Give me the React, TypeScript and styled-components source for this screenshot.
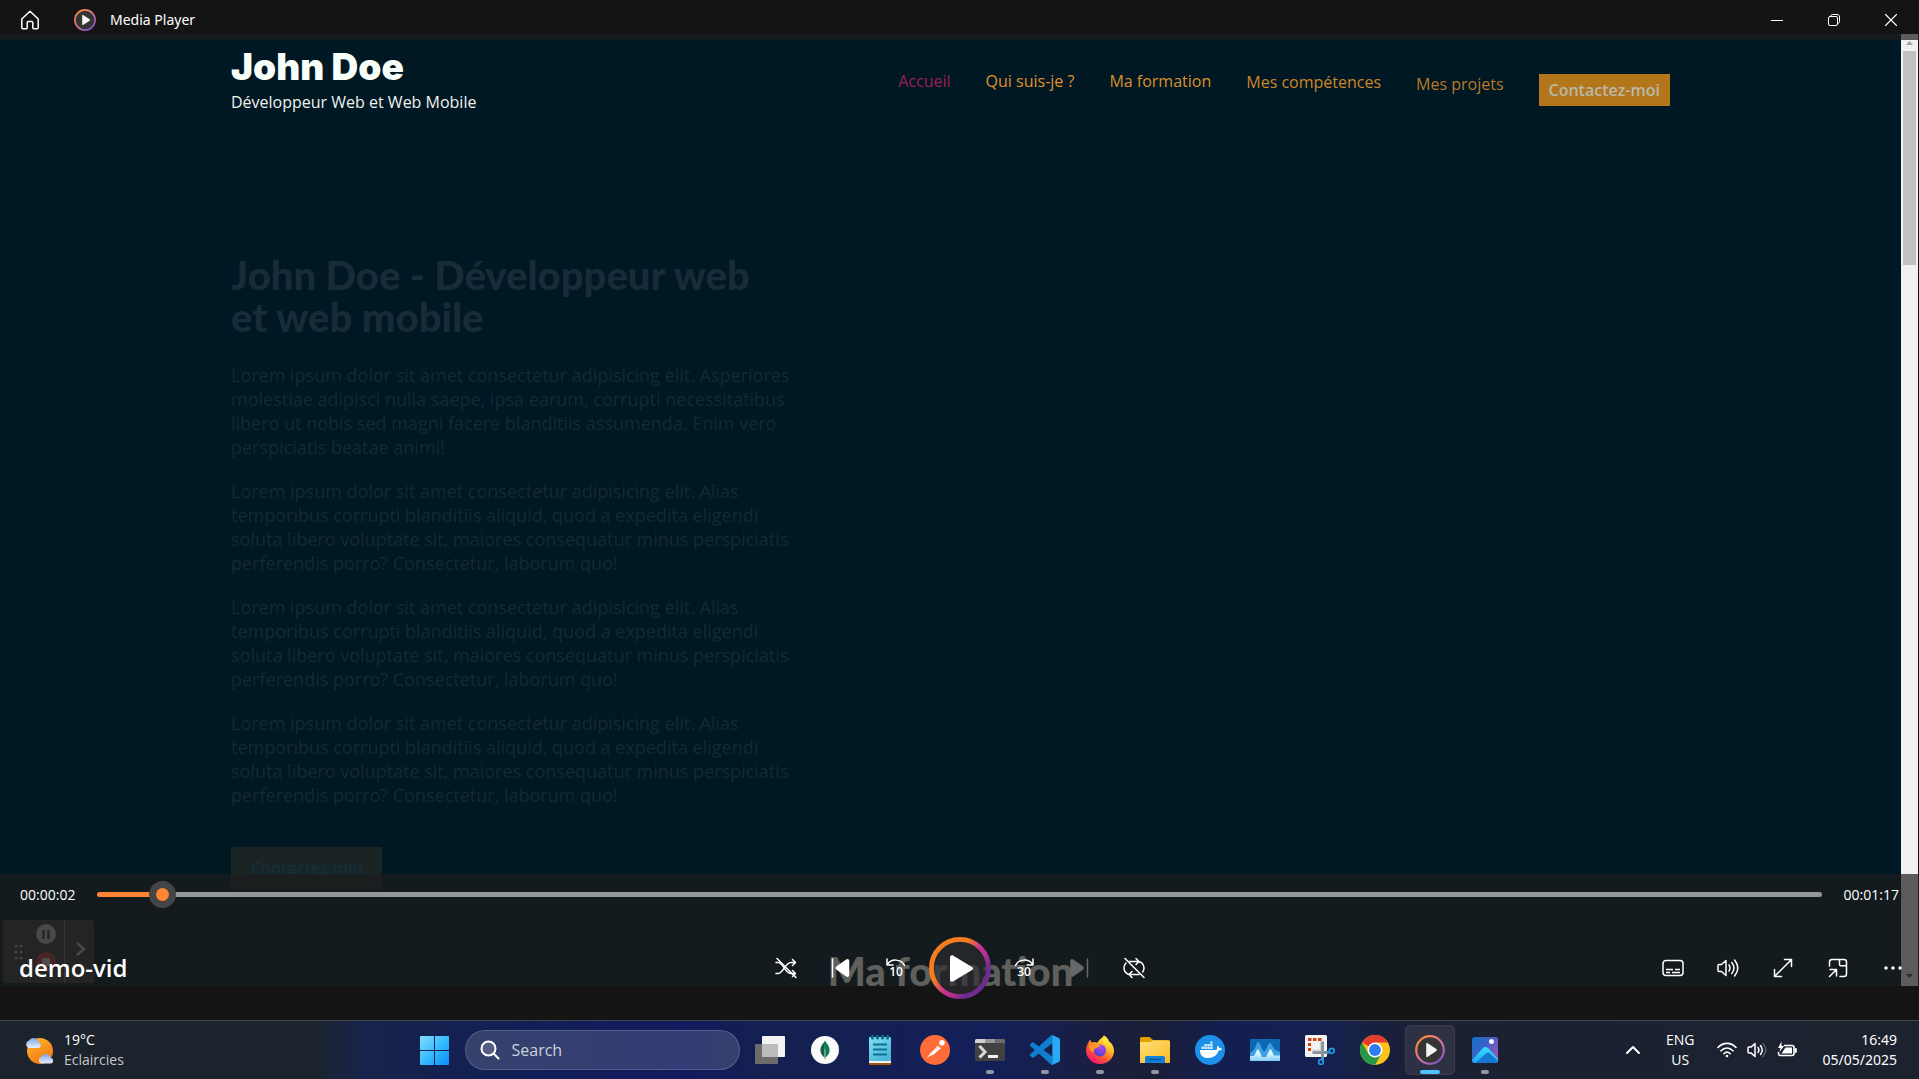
import React from "react";
import styled, { createGlobalStyle } from "styled-components";

const ui = `"Open Sans", "Noto Sans", sans-serif`;
const display = `"Lato", sans-serif`;
const tint = "rgba(28, 28, 28, 0.7)";

const GlobalStyle = createGlobalStyle`
  * { box-sizing: border-box; }
  body { margin: 0; background: #141414; font-family: ${ui}; overflow: hidden; }
  h1, h2, p, ul { margin: 0; padding: 0; }
  button { border: 0; padding: 0; background: none; color: inherit; font: inherit; }
  a { color: inherit; text-decoration: none; }
  svg { display: block; }
`;

const Desktop = styled.div`
  display: grid;
  grid-template-rows: minmax(0, 1fr) 59px;
  height: 100vh;
`;

const Player = styled.main`
  position: relative;
  display: grid;
  padding: 34px 1px 34px 0;
  background: #141414;
  color: #fff;
`;

/* ---------- recorded web page ---------- */

const Frame = styled.div`
  position: relative;
  display: grid;
  grid-template-columns: minmax(0, 1fr) 17px;
  overflow: hidden;
  background: #001724;
`;

const Site = styled.div`
  width: 100%;
  max-width: 1439px;
  height: 0;
  margin: 0 auto;
`;

const SiteHeader = styled.header`
  display: flex;
  justify-content: space-between;
  padding-top: 12px;
`;

const BrandName = styled.div`
  font-family: "Inter", sans-serif;
  font-size: 37px;
  line-height: 42px;
  font-weight: 900;
  color: #f8fff8;
`;

const BrandRole = styled.div`
  padding-bottom: 2px;
  font-size: 16px;
  line-height: 28px;
  color: #f0f2ec;
`;

const SiteNav = styled.nav`
  display: flex;
  align-items: flex-start;
  gap: 35px;
  padding-top: 24px;
  font-size: 16px;
  line-height: 22px;
`;

const NavLink = styled.a<{ $drop?: number; $color: string }>`
  margin-top: ${(p) => p.$drop ?? 0}px;
  color: ${(p) => p.$color};
`;

const NavButton = styled.a`
  margin-top: 4px;
  padding: 5px 10px;
  background: #b3761b;
  color: #b9b9a8;
  font-weight: 600;
`;

const Hero = styled.section`
  width: 570px;
  padding-top: 136px;
  color: #142a33;
`;

const HeroTitle = styled.h1`
  margin-bottom: 25px;
  font-family: ${display};
  font-size: 40px;
  line-height: 42px;
  font-weight: 900;
  color: #172c38;
  white-space: pre-line;
`;

const HeroText = styled.p`
  margin-bottom: 20px;
  font-family: ${ui};
  font-size: 18px;
  line-height: 24px;
  white-space: pre;
`;

const HeroButton = styled.a`
  display: inline-block;
  margin-top: 20px;
  padding: 9px 20px;
  background: #1a2424;
  color: #142f3c;
  font-size: 16px;
  line-height: 24px;
  font-weight: 600;
`;

const SectionTitle = styled.h2`
  margin-top: 61px;
  text-align: center;
  font-family: ${display};
  font-size: 40px;
  line-height: 42px;
  font-weight: 900;
  color: #fffff0;
`;

const ScrollTrack = styled.div`
  display: flex;
  flex-direction: column;
  align-items: center;
  justify-content: space-between;
  padding: 6px 0 4px;
  background: #f1f1f3;
`;

const ScrollThumb = styled.div`
  width: 13px;
  height: 214px;
  margin-bottom: auto;
  background: #c1c1c3;
`;

const Recorder = styled.div`
  position: absolute;
  left: 3px;
  bottom: 3px;
`;

/* ---------- player chrome ---------- */

const TitleBar = styled.header`
  position: absolute;
  inset: 0 0 auto 0;
  display: flex;
  align-items: center;
  height: 40px;
  padding-left: 20px;
  background: linear-gradient(#141414 34px, ${tint} 34px);
`;

const AppName = styled.span`
  margin-left: 14px;
  font-family: "Noto Sans", sans-serif;
  font-size: 14px;
  line-height: 20px;
`;

const HomeButton = styled.button`
  margin-right: 34px;
`;

const WindowButtons = styled.div`
  display: flex;
  margin-left: auto;
`;

const WindowButton = styled.button`
  display: grid;
  place-items: center;
  width: 57px;
  height: 38px;
`;

const Transport = styled.section`
  position: absolute;
  inset: auto 0 0 0;
  display: grid;
  grid-template-rows: 41px 105px;
  background: linear-gradient(${tint} 112px, #141414 112px);
`;

const SeekRow = styled.div`
  display: flex;
  align-items: center;
  gap: 22px;
  padding: 0 20px;
  font-size: 14px;
  line-height: 20px;
`;

const Seek = styled.input`
  flex: 1;
  height: 27px;
  margin: 0;
  appearance: none;
  background: none;

  &::-webkit-slider-runnable-track {
    height: 5px;
    border-radius: 3px;
    background: linear-gradient(90deg, #ff8533 60px, #929697 60px);
  }
  &::-webkit-slider-thumb {
    appearance: none;
    width: 27px;
    height: 27px;
    margin-top: -11px;
    border: 7px solid #454545;
    border-radius: 50%;
    background: #ff8533;
  }
`;

const ControlRow = styled.div`
  display: grid;
  grid-template-columns: 1fr auto 1fr;
  align-items: center;
  padding: 0 4px;
`;

const MediaTitle = styled.div`
  padding-left: 15px;
  font-size: 24px;
  line-height: 32px;
  font-weight: 600;
`;

const Controls = styled.div`
  display: flex;
  align-items: center;
  justify-content: flex-end;
  gap: 11px;
`;

const ControlButton = styled.button`
  display: grid;
  place-items: center;
  width: 44px;
  height: 44px;

  &:disabled { color: #66696b; }
`;

const PlayButton = styled(ControlButton)`
  width: 62px;
  height: 62px;
`;

/* ---------- taskbar ---------- */

const Taskbar = styled.footer`
  display: grid;
  grid-template-columns: 1fr auto 1fr;
  align-items: center;
  border-top: 1px solid #45484e;
  color: #fff;
  font-size: 14px;
  line-height: 20px;
  background: linear-gradient(90deg, #1c232c 0 16%, #17234a 19%, #111f56 27%, #131b5e 36%,
    #14204f 40%, #131f58 52%, #1a1f40 57%, #1b1e36 60%, #131f52 64%, #14204f 69%, #1c2033 74%, #1c232e 100%);
`;

const Weather = styled.button`
  display: flex;
  align-items: center;
  gap: 8px;
  justify-self: start;
  margin-left: 24px;
  text-align: left;
`;

const Muted = styled.div`
  color: #c6c9cc;
`;

const Apps = styled.div`
  display: flex;
  align-items: center;
  gap: 5px;
`;

const AppButton = styled.button<{ $active?: boolean; $open?: boolean }>`
  position: relative;
  display: grid;
  place-items: center;
  width: 50px;
  height: 50px;
  border-radius: 5px;
  background: ${(p) => (p.$active ? "rgba(255,255,255,0.08)" : "none")};
  box-shadow: ${(p) => (p.$active ? "inset 0 0 0 1px rgba(255,255,255,0.06)" : "none")};

  &::after {
    content: "";
    display: ${(p) => (p.$active || p.$open ? "block" : "none")};
    position: absolute;
    bottom: 1px;
    width: ${(p) => (p.$active ? 20 : 8)}px;
    height: 4px;
    border-radius: 2px;
    background: ${(p) => (p.$active ? "#4cc2ff" : "#9396a3")};
  }
`;

const SearchBox = styled.label`
  display: flex;
  align-items: center;
  gap: 12px;
  width: 275px;
  height: 40px;
  padding: 0 14px;
  border: 1px solid rgba(255, 255, 255, 0.16);
  border-radius: 20px;
  background: rgba(255, 255, 255, 0.15);
`;

const SearchInput = styled.input`
  flex: 1;
  min-width: 0;
  padding: 0;
  border: 0;
  outline: 0;
  background: none;
  color: #fff;
  font-family: ${ui};
  font-size: 16px;

  &::placeholder { color: #cdd0dc; opacity: 1; }
`;

const Tray = styled.div`
  display: flex;
  align-items: center;
  justify-self: end;
  padding-right: 22px;
`;

const Language = styled.button`
  margin: 0 22px 0 25px;
  text-align: center;
`;

const Status = styled.button`
  display: flex;
  align-items: center;
  gap: 10px;
`;

const Clock = styled.button`
  margin-left: 26px;
  font-family: "Noto Sans", sans-serif;
  text-align: right;
`;

/* ---------- drawings ---------- */

type LineProps = { w?: number; h?: number; box?: string; sw?: number; children: React.ReactNode };
const Line = ({ w = 22, h = 22, box = "0 0 22 22", sw = 1.5, children }: LineProps) => (
  <svg width={w} height={h} viewBox={box} fill="none" stroke="currentColor" strokeWidth={sw} strokeLinecap="round" strokeLinejoin="round" aria-hidden>
    {children}
  </svg>
);

const MediaLogo = ({ size, id }: { size: number; id: string }) => (
  <svg width={size} height={size} viewBox="0 0 30 30" aria-hidden>
    <defs>
      <linearGradient id={id} x1="0.15" y1="0.1" x2="0.8" y2="0.95">
        <stop offset="0" stopColor="#f98a3c" />
        <stop offset="0.5" stopColor="#d9729a" />
        <stop offset="1" stopColor="#8557c9" />
      </linearGradient>
    </defs>
    <circle cx="15" cy="15" r="13.8" fill="#353535" stroke={`url(#${id})`} strokeWidth="2.2" />
    <path d="M11.2 8.8v12.4c0 .8.6 1 1.2.7l9-6c.6-.4.6-1.4 0-1.8l-9-6c-.6-.3-1.2-.1-1.2.7z" fill="#f4f4f4" />
  </svg>
);

const PlayRing = () => (
  <svg width="62" height="62" viewBox="0 0 62 62" aria-hidden>
    <defs>
      <linearGradient id="ring" x1="0.2" y1="0.25" x2="0.85" y2="0.8">
        <stop offset="0" stopColor="#f57c1f" />
        <stop offset="0.22" stopColor="#f57c1f" />
        <stop offset="0.5" stopColor="#cc3290" />
        <stop offset="0.68" stopColor="#b5308f" />
        <stop offset="0.9" stopColor="#6f2c90" />
      </linearGradient>
    </defs>
    <circle cx="31" cy="31" r="28.6" fill="rgba(45,45,49,0.65)" stroke="url(#ring)" strokeWidth="4.8" />
    <path d="M21 20.5v22c0 2 1.8 2.8 3.4 1.8L43 33c1.4-.9 1.4-2.2 0-3L24.4 18.7C22.8 17.7 21 18.5 21 20.5z" fill="#fff" />
  </svg>
);

const RecorderDrawing = () => (
  <svg width="91" height="63" viewBox="0 0 91 63" aria-hidden>
    <rect width="91" height="63" rx="3" fill="#373737" />
    <g fill="#a5a5a5">
      {[26, 32, 38].map((y) => (
        <g key={y}>
          <circle cx="13" cy={y} r="1.5" />
          <circle cx="18" cy={y} r="1.5" />
        </g>
      ))}
    </g>
    <circle cx="43" cy="14" r="10" fill="#b0b0b0" />
    <path d="M40.5 10v9M45.5 10v9" stroke="#373737" strokeWidth="2.4" />
    <circle cx="43" cy="42" r="10" fill="#b03840" />
    <rect x="39" y="38" width="8" height="8" fill="#c8b8b8" />
    <path d="M61.5 1v61" stroke="#777" />
    <path d="M74 23l7 6-7 6" fill="none" stroke="#b4b4b4" strokeWidth="2.4" />
  </svg>
);

const WeatherIcon = () => (
  <svg width="32" height="30" viewBox="0 0 32 30" aria-hidden>
    <defs>
      <linearGradient id="sun" x1="0.2" y1="0" x2="0.7" y2="1"><stop offset="0" stopColor="#fcb72c" /><stop offset="1" stopColor="#f0730f" /></linearGradient>
      <linearGradient id="cloud" x1="0" y1="0" x2="0" y2="1"><stop offset="0" stopColor="#7fa6e6" /><stop offset="1" stopColor="#e6effc" /></linearGradient>
    </defs>
    <circle cx="16" cy="16" r="13" fill="url(#sun)" />
    <path d="M4.5 13a4 4 0 0 1 .5-7.5 5 5 0 0 1 9.3 1.5 3.2 3.2 0 0 1 .7 6z" fill="url(#cloud)" />
    <path d="M17.5 28.5a3.6 3.6 0 0 1 .3-7 4.6 4.6 0 0 1 8.7 1.2 3 3 0 0 1 .8 5.8z" fill="url(#cloud)" />
  </svg>
);

const Windows = () => (
  <svg width="29" height="29" viewBox="0 0 29 29" aria-hidden>
    <defs><linearGradient id="win" x1="0" y1="0" x2="1" y2="1"><stop offset="0" stopColor="#85dcff" /><stop offset="0.5" stopColor="#37bdff" /><stop offset="1" stopColor="#0a8cf8" /></linearGradient></defs>
    <path fill="url(#win)" d="M1 0h13v14H0V1a1 1 0 0 1 1-1zM15 0h13a1 1 0 0 1 1 1v13H15zM0 15h14v14H1a1 1 0 0 1-1-1zM15 15h14v13a1 1 0 0 1-1 1H15z" />
  </svg>
);

const TaskView = () => (
  <svg width="30" height="30" viewBox="0 0 30 30" aria-hidden>
    <rect x="7" y="1" width="23" height="21" rx="1" fill="#f3f3f3" />
    <rect x="0" y="9" width="23" height="20" rx="1" fill="#6c6c6c" />
    <rect x="7" y="9" width="16" height="13" fill="#bcbcbc" />
  </svg>
);

const Mongo = () => (
  <svg width="30" height="30" viewBox="0 0 30 30" aria-hidden>
    <circle cx="15" cy="15" r="14" fill="#fafafa" />
    <path d="M15 5.5c-1 2.5-4.6 5-4.6 9.7 0 3.6 2.2 5.6 4.1 7.2z" fill="#116149" />
    <path d="M15 5.5c1 2.5 4.6 5 4.6 9.7 0 3.6-2.2 5.6-4.1 7.2H14.5z" fill="#0a7d50" />
    <path d="M15 14v10.5" stroke="#9fb3a8" />
  </svg>
);

const Notepad = () => (
  <svg width="24" height="30" viewBox="0 0 24 30" aria-hidden>
    <defs><linearGradient id="note" x1="0" y1="0" x2="0.6" y2="1"><stop offset="0" stopColor="#7fe0f2" /><stop offset="1" stopColor="#4cb4d6" /></linearGradient></defs>
    <rect x="1" y="26" width="22" height="4" rx="1" fill="#a3520f" />
    <rect x="1" y="24" width="22" height="4" fill="#f3f3f3" />
    <rect x="1" y="2" width="22" height="24" rx="1" fill="url(#note)" />
    <path d="M4.5 1v2M9.5 1v2M14.5 1v2M19.5 1v2" stroke="#0c6a8c" strokeWidth="3" strokeLinecap="round" />
    <path d="M5 9.5h14M5 14.5h14M5 19.5h14" stroke="#0e6f93" strokeWidth="2" />
  </svg>
);

const Postman = () => (
  <svg width="30" height="30" viewBox="0 0 30 30" aria-hidden>
    <circle cx="15" cy="15" r="15" fill="#ff6c37" />
    <path d="M6.5 23.5l4-5.5 7.5-7.5 3 2.8-8 6.7-3 .8z" fill="#fff" />
    <circle cx="22" cy="7.8" r="2.8" fill="#fff" />
    <path d="M10 18.5l9-7M18 12l3 1.5" stroke="#ffb99f" strokeWidth="0.8" />
  </svg>
);

const Terminal = () => (
  <svg width="30" height="24" viewBox="0 0 30 24" aria-hidden>
    <rect y="1" width="30" height="22" rx="1.5" fill="#414141" />
    <path d="M1.5 1H10v4H0V2.5A1.5 1.5 0 0 1 1.5 1z" fill="#d0d0d4" />
    <path d="M10 1h10v4H10z" fill="#96969a" />
    <path d="M20 1h8.5A1.5 1.5 0 0 1 30 2.5V5H20z" fill="#6c6c70" />
    <path d="M4.5 8l5.5 6-5.5 5.5" fill="none" stroke="#d8d8d8" strokeWidth="3" />
    <path d="M13 18.5h10" stroke="#f2f2f2" strokeWidth="3" />
  </svg>
);

const VsCode = () => (
  <svg width="30" height="30" viewBox="0 0 24 24" aria-hidden>
    <path fill="#0e7fce" d="M23.15 2.587L18.21.21a1.494 1.494 0 0 0-1.705.29l-9.46 8.63-4.12-3.128a.999.999 0 0 0-1.276.057L.327 7.261A1 1 0 0 0 .326 8.74L3.899 12 .326 15.26a1 1 0 0 0 .001 1.479L1.65 17.94a.999.999 0 0 0 1.276.057l4.12-3.128 9.46 8.63a1.492 1.492 0 0 0 1.704.29l4.942-2.377A1.5 1.5 0 0 0 24 20.06V3.939a1.5 1.5 0 0 0-.85-1.352zm-5.146 14.861L10.826 12l7.178-5.448v10.896z" />
    <path fill="#2aa9f5" d="M18 .15l5.15 2.437a1.5 1.5 0 0 1 .85 1.352V20.06a1.5 1.5 0 0 1-.85 1.352L18 23.85z" />
  </svg>
);

const Firefox = () => (
  <svg width="30" height="30" viewBox="0 0 30 30" aria-hidden>
    <defs>
      <linearGradient id="fox" x1="0.85" y1="0.1" x2="0.25" y2="0.95"><stop offset="0" stopColor="#fff044" /><stop offset="0.35" stopColor="#ffb52a" /><stop offset="0.65" stopColor="#ff5a30" /><stop offset="1" stopColor="#f5156c" /></linearGradient>
      <radialGradient id="globe" cx="0.6" cy="0.25" r="0.8"><stop offset="0" stopColor="#b04af5" /><stop offset="1" stopColor="#4a3fd0" /></radialGradient>
    </defs>
    <path d="M19 .5c3 1.7 4.5 3.8 5 6 2.8 1.5 5 5.5 5 9.3C29 23.5 22.8 29 15 29S1 23 1 15.5C1 12 2.2 9 4 6.5L5.2 4.5 6.5 7.5c2-.8 4-.8 6 .2 1-3.2 4.5-4 6.5-7.2z" fill="url(#fox)" />
    <circle cx="15" cy="15.5" r="6" fill="url(#globe)" />
    <path d="M3.5 11c3-3 6-3.3 9-1.7 1.5.2 2.6 1 3 2-1.5.3-2.5 1-3.5 1.9-2.5 0-3.7 1.5-3.2 3.8C6 17 4.5 14 3.5 11z" fill="#ff9428" />
    <path d="M19 .5c1 4 5.5 6.5 5.6 12.5-1-2.5-3-4-5.2-4.5C17 6.5 17.5 3 19 .5z" fill="#ffe23c" />
  </svg>
);

const Explorer = () => (
  <svg width="30" height="28" viewBox="0 0 30 28" aria-hidden>
    <defs><linearGradient id="folder" x1="0" y1="0" x2="0.8" y2="1"><stop offset="0" stopColor="#ffdf7a" /><stop offset="1" stopColor="#fcbd27" /></linearGradient></defs>
    <path d="M0 2.5A1.5 1.5 0 0 1 1.5 1h8L13 4h15.5A1.5 1.5 0 0 1 30 5.5V10H0z" fill="#e2a100" />
    <path d="M0 6h10l3-1.5h15.5A1.5 1.5 0 0 1 30 6v20a1 1 0 0 1-1 1H0z" fill="url(#folder)" />
    <path d="M5 27v-5.5A1.5 1.5 0 0 1 6.5 20h17a1.5 1.5 0 0 1 1.5 1.5V27z" fill="#1080d8" />
    <path d="M9 23.5h12" stroke="#0a57a0" strokeWidth="1.6" />
  </svg>
);

const Docker = () => (
  <svg width="30" height="30" viewBox="0 0 30 30" aria-hidden>
    <circle cx="15" cy="15" r="15" fill="#1d91ea" />
    <path d="M5 15h15.7c1.3 0 1.6-.8 1.3-2-.1-.9.3-1.7 1-2.3.8.7 1.2 1.5 1.3 2.4 1 0 2 .2 2.7.9-.7 1.2-1.8 1.7-3.4 1.6C22 20.5 18.6 23 13 23c-5 0-8.2-2.6-8-8z" fill="#fff" />
    <path fill="#d9efff" d="M6.5 11.5h2.4v2.6H6.5zM9.4 11.5h2.4v2.6H9.4zM12.3 11.5h2.4v2.6h-2.4zM15.2 11.5h2.4v2.6h-2.4zM9.4 9h2.4v2H9.4zM12.3 9h2.4v2h-2.4zM15.2 9h2.4v2h-2.4zM15.2 6.6h2.4v2h-2.4z" />
  </svg>
);

const Monitor = () => (
  <svg width="30" height="24" viewBox="0 0 30 24" aria-hidden>
    <defs><linearGradient id="wave" x1="0" y1="0" x2="0" y2="1"><stop offset="0.3" stopColor="#e3f7ff" /><stop offset="1" stopColor="#7fcdf5" /></linearGradient></defs>
    <rect y="1" width="30" height="22" rx="1" fill="#0d67b3" />
    <path d="M0 15l4-3 3-7c1-1.5 2-1 2.6.4L13 13h2l3.5-7c1-1.5 2-1.5 2.6 0L25 12l5 2v8a1 1 0 0 1-1 1H1a1 1 0 0 1-1-1z" fill="#3aa2e0" />
    <path d="M0 18h4l3-6c.6-1 1.4-1 1.9 0L12 19h4l3.5-7c.6-1 1.3-1 1.8 0L24 17.5h6V22a1 1 0 0 1-1 1H1a1 1 0 0 1-1-1z" fill="url(#wave)" />
  </svg>
);

const Snip = () => (
  <svg width="30" height="30" viewBox="0 0 30 30" aria-hidden>
    <rect width="22" height="22" rx="1.5" fill="#f3f3f3" />
    <path d="M3 4.5h3.5M8 4.5h3.5M13 4.5h3.5M4.5 8v3M4.5 13v3" stroke="#d8400f" strokeWidth="3" />
    <path d="M7.5 17.5h16M17.5 6.5v18" stroke="#8a9299" strokeWidth="3" />
    <path d="M7 15.5h8.5V7" fill="none" stroke="#c9ced2" strokeWidth="1.5" />
    <circle cx="26.8" cy="15.8" r="2.5" fill="none" stroke="#1f9be0" strokeWidth="1.7" />
    <circle cx="16" cy="27" r="2.4" fill="none" stroke="#1f9be0" strokeWidth="1.7" />
    <path d="M21.5 17.5l3-.7M17.5 22v3" stroke="#1f9be0" strokeWidth="2" />
  </svg>
);

const Chrome = () => (
  <svg width="30" height="30" viewBox="0 0 30 30" aria-hidden>
    <circle cx="15" cy="15" r="15" fill="#fcc31e" />
    <path d="M15 15L2 7.5A15 15 0 0 1 28 7.5H15z" fill="#e33b2e" />
    <path d="M2 7.5A15 15 0 0 0 15 30l6.5-11.3L15 15l-6.5 3.8z" fill="#269847" />
    <circle cx="15" cy="15" r="7.5" fill="#fff" />
    <circle cx="15" cy="15" r="5.9" fill="#2d7df0" />
  </svg>
);

const Photos = () => (
  <svg width="26" height="26" viewBox="0 0 26 26" aria-hidden>
    <defs>
      <linearGradient id="photo" x1="0" y1="0" x2="1" y2="0.7"><stop offset="0" stopColor="#1170c4" /><stop offset="0.5" stopColor="#3b62c8" /><stop offset="1" stopColor="#9a56b8" /></linearGradient>
      <linearGradient id="hill" x1="0.7" y1="0" x2="0.2" y2="1"><stop offset="0" stopColor="#3fe0ff" /><stop offset="1" stopColor="#1aa0ee" /></linearGradient>
      <clipPath id="photoClip"><rect width="26" height="26" rx="3" /></clipPath>
    </defs>
    <g clipPath="url(#photoClip)">
      <rect width="26" height="26" fill="url(#photo)" />
      <path d="M-1 24L11 11c1.5-1.5 3.5-1.5 5 0l12 13v4H-1z" fill="url(#hill)" />
      <path d="M3.5 26L14 16.5c1.3-1.2 2.7-1.2 4 0L28 26z" fill="#1478d2" />
      <circle cx="19.5" cy="4.5" r="2.5" fill="#f5f5ff" />
    </g>
  </svg>
);

const BigVolume = () => (
  <Line>
    <path d="M1 8.5v5c0 .6.4 1 1 1h2.5l4.5 4V3.5l-4.5 4H2c-.6 0-1 .4-1 1z" />
    <path d="M12 8c1.3 2 1.3 4 0 6M14.8 5.5c2.7 3.5 2.7 7.5 0 11M17.6 3c4 5 4 11 0 16" />
  </Line>
);

const lorem = `Lorem ipsum dolor sit amet consectetur adipisicing elit. Alias
temporibus corrupti blanditiis aliquid, quod a expedita eligendi
soluta libero voluptate sit, maiores consequatur minus perspiciatis
perferendis porro? Consectetur, laborum quo!`;

const paragraphs = [
  `Lorem ipsum dolor sit amet consectetur adipisicing elit. Asperiores
molestiae adipisci nulla saepe, ipsa earum, corrupti necessitatibus
libero ut nobis sed magni facere blanditiis assumenda. Enim vero
perspiciatis beatae animi!`,
  lorem,
  lorem,
  lorem,
];

const navItems = [
  { label: "Accueil", color: "#9c1f55", drop: 0 },
  { label: "Qui suis-je ?", color: "#e0912a", drop: 0 },
  { label: "Ma formation", color: "#dc8f29", drop: 0 },
  { label: "Mes compétences", color: "#cd8626", drop: 1 },
  { label: "Mes projets", color: "#b87a24", drop: 3 },
];

const apps = [
  { name: "Task view", icon: <TaskView /> },
  { name: "MongoDB Compass", icon: <Mongo /> },
  { name: "Notepad", icon: <Notepad /> },
  { name: "Postman", icon: <Postman /> },
  { name: "Terminal", icon: <Terminal />, open: true },
  { name: "Visual Studio Code", icon: <VsCode />, open: true },
  { name: "Firefox", icon: <Firefox />, open: true },
  { name: "File Explorer", icon: <Explorer />, open: true },
  { name: "Docker Desktop", icon: <Docker /> },
  { name: "Task Manager", icon: <Monitor /> },
  { name: "Snipping Tool", icon: <Snip /> },
  { name: "Chrome", icon: <Chrome /> },
  { name: "Media Player", icon: <MediaLogo size={30} id="mpTask" />, active: true },
  { name: "Photos", icon: <Photos />, open: true },
];

const SkipText = ({ children }: { children: string }) => (
  <text x="11" y="19" textAnchor="middle" fontFamily="Open Sans" fontSize="12" fontWeight="600" fill="currentColor" stroke="none">
    {children}
  </text>
);

export default function App() {
  return (
    <>
      <GlobalStyle />
      <Desktop>
        <Player>
          <Frame>
            <Site>
              <SiteHeader>
                <div>
                  <BrandName>John Doe</BrandName>
                  <BrandRole>Développeur Web et Web Mobile</BrandRole>
                </div>
                <SiteNav>
                  {navItems.map((n) => (
                    <NavLink key={n.label} href="#" $color={n.color} $drop={n.drop}>{n.label}</NavLink>
                  ))}
                  <NavButton href="#">Contactez-moi</NavButton>
                </SiteNav>
              </SiteHeader>
              <Hero>
                <HeroTitle>{"John Doe - Développeur web\net web mobile"}</HeroTitle>
                {paragraphs.map((text, i) => <HeroText key={i}>{text}</HeroText>)}
                <HeroButton href="#">Contactez-moi</HeroButton>
              </Hero>
              <SectionTitle>Ma formation</SectionTitle>
            </Site>
            <ScrollTrack>
              <svg width="9" height="11" viewBox="0 0 9 11" aria-hidden><path d="M1 5l3.5-4L8 5z" fill="#a0a0a2" /></svg>
              <ScrollThumb />
              <svg width="9" height="9" viewBox="0 0 9 9" aria-hidden><path d="M1 1h7L4.5 5z" fill="#505050" /></svg>
            </ScrollTrack>
            <Recorder><RecorderDrawing /></Recorder>
          </Frame>

          <TitleBar>
            <HomeButton aria-label="Home">
              <Line w={20} h={20} box="0 0 20 20">
                <path d="M10 1.2L1.8 9v8.5c0 .8.5 1.3 1.2 1.3h3.2c.6 0 1-.4 1-1v-5.3c0-.6.4-1 1-1h3.6c.6 0 1 .4 1 1v5.3c0 .6.4 1 1 1H17c.7 0 1.2-.5 1.2-1.3V9z" />
              </Line>
            </HomeButton>
            <MediaLogo size={22} id="mpTitle" />
            <AppName>Media Player</AppName>
            <WindowButtons>
              <WindowButton aria-label="Minimize"><Line w={12} h={12} box="0 0 12 12" sw={1}><path d="M0 6.5h12" /></Line></WindowButton>
              <WindowButton aria-label="Restore">
                <Line w={12} h={12} box="0 0 12 12" sw={1}>
                  <rect x="0.5" y="2.5" width="9" height="9" rx="1.5" /><path d="M2.5 2.5c0-1.2.8-2 2-2H9c1.5 0 2.5 1 2.5 2.5v4.5c0 1.2-.8 2-2 2" />
                </Line>
              </WindowButton>
              <WindowButton aria-label="Close"><Line w={12} h={12} box="0 0 12 12" sw={1.1}><path d="M.5.5l11 11M11.5.5l-11 11" /></Line></WindowButton>
            </WindowButtons>
          </TitleBar>

          <Transport>
            <SeekRow>
              <span>00:00:02</span>
              <Seek type="range" aria-label="Seek" min={0} max={77} step="any" defaultValue={2.35} />
              <span>00:01:17</span>
            </SeekRow>
            <ControlRow>
              <MediaTitle>demo-vid</MediaTitle>
              <Controls>
                <ControlButton aria-label="Shuffle">
                  <Line>
                    <path d="M1 5.5h2c5.5 0 7 11 13 11h4.5M1 16.5h2c5.5 0 7-11 13-11h4.5M17.5 2.5l3 3-3 3M17.5 13.5l3 3-3 3" />
                    <path d="M2 1.5l19 19" />
                  </Line>
                </ControlButton>
                <ControlButton aria-label="Previous">
                  <Line><path d="M2.5 2v18" /><path d="M18.5 4v14c0 1-.9 1.5-1.8.9L7 12.2c-.9-.6-.9-1.8 0-2.4l9.7-6.7c.9-.6 1.8-.1 1.8.9z" fill="currentColor" /></Line>
                </ControlButton>
                <ControlButton aria-label="Back 10 seconds">
                  <Line><path d="M2 2v6h6M2.3 7.5C6 1.5 16 1.5 19.5 8.5" /><SkipText>10</SkipText></Line>
                </ControlButton>
                <PlayButton aria-label="Play"><PlayRing /></PlayButton>
                <ControlButton aria-label="Forward 30 seconds">
                  <Line><path d="M20 2v6h-6M19.7 7.5C16 1.5 6 1.5 2.5 8.5" /><SkipText>30</SkipText></Line>
                </ControlButton>
                <ControlButton aria-label="Next" disabled>
                  <Line><path d="M19.5 2v18" /><path d="M3 4v14c0 1 .9 1.5 1.8.9l9.7-6.7c.9-.6.9-1.8 0-2.4L4.8 3.1C3.9 2.5 3 3 3 4z" fill="currentColor" /></Line>
                </ControlButton>
                <ControlButton aria-label="Repeat">
                  <Line>
                    <path d="M6 4.5h9c3.5 0 6 3 6 6.5 0 1.5-.5 3-1.3 4M13 1.5l3 3-3 3M16 17.5H7c-3.5 0-6-3-6-6.5 0-2 .8-3.8 2-5M9 14.5l-3 3 3 3" />
                    <path d="M2 1.5l19 19" />
                  </Line>
                </ControlButton>
              </Controls>
              <Controls>
                <ControlButton aria-label="Captions">
                  <Line><rect x="1" y="3.5" width="20" height="15" rx="3" /><path d="M4 12.5h7M13 12.5h5M4 15.5h4M10 15.5h8" strokeLinecap="butt" /></Line>
                </ControlButton>
                <ControlButton aria-label="Volume"><BigVolume /></ControlButton>
                <ControlButton aria-label="Full screen">
                  <Line><path d="M2.5 19.5l17-17M12.5 2.5h7v7M2.5 12.5v7h7" /></Line>
                </ControlButton>
                <ControlButton aria-label="Mini player">
                  <Line>
                    <path d="M2.5 9V5c0-1.5 1-2.5 2.5-2.5h12c1.5 0 2.5 1 2.5 2.5v12c0 1.5-1 2.5-2.5 2.5h-4M12.5 2.5v5c0 .8.5 1.3 1.3 1.3h5.7" />
                    <path d="M3 12.5h6.5V19M9.5 12.5l-7 7" />
                  </Line>
                </ControlButton>
                <ControlButton aria-label="More">
                  <svg width="18" height="4" viewBox="0 0 18 4" fill="currentColor" aria-hidden><circle cx="2" cy="2" r="1.7" /><circle cx="9" cy="2" r="1.7" /><circle cx="16" cy="2" r="1.7" /></svg>
                </ControlButton>
              </Controls>
            </ControlRow>
          </Transport>
        </Player>

        <Taskbar>
          <Weather>
            <WeatherIcon />
            <div>
              <div>19°C</div>
              <Muted>Eclaircies</Muted>
            </div>
          </Weather>
          <Apps>
            <AppButton aria-label="Start"><Windows /></AppButton>
            <SearchBox>
              <Line w={20} h={20} box="0 0 20 20" sw={2}><circle cx="8.5" cy="8.5" r="7" fill="rgba(255,255,255,0.15)" /><path d="M13.8 13.8l4.7 4.7" /></Line>
              <SearchInput type="text" placeholder="Search" aria-label="Search" />
            </SearchBox>
            {apps.map((a) => (
              <AppButton key={a.name} aria-label={a.name} $open={a.open} $active={a.active}>{a.icon}</AppButton>
            ))}
          </Apps>
          <Tray>
            <button aria-label="Hidden icons"><Line w={16} h={10} box="0 0 16 10" sw={2}><path d="M2 8l6-6 6 6" /></Line></button>
            <Language><div>ENG</div><div>US</div></Language>
            <Status aria-label="Network, volume and battery">
              <Line w={20} h={16} box="0 0 20 16" sw={1.6}>
                <path d="M1 5.5c5-5.5 13-5.5 18 0M4 8.8c3.5-3.8 8.5-3.8 12 0M6.8 11.8c2-2 4.4-2 6.4 0" />
                <circle cx="10" cy="14" r="1.3" fill="currentColor" stroke="none" />
              </Line>
              <Line w={20} h={16} box="0 0 20 16" sw={1.5}>
                <path d="M1 6v4c0 .5.4.9.9.9H4l4 3.6v-13L4 5.1H1.9C1.4 5.1 1 5.5 1 6zM11 5.5c1.2 1.6 1.2 3.4 0 5M13.5 3.5c2.3 3 2.3 6 0 9" />
                <path d="M16 1.5c3.5 4 3.5 9 0 13" stroke="#5a6068" />
              </Line>
              <Line w={20} h={18} box="0 0 20 18" sw={1.6}>
                <path d="M7.5 4.5H15c1.4 0 2 .8 2 2v6c0 1.4-.8 2-2 2H3.5c-1.4 0-2-.8-2-2v-1" />
                <path d="M8.5 6.5H15v6H4.5z" fill="currentColor" stroke="none" />
                <path d="M18.8 8v3" strokeWidth="2" />
                <path d="M4.5.5L1 7h2.500L2.500 11 7 5H4.500z" fill="currentColor" stroke="none" />
              </Line>
            </Status>
            <Clock><div>16:49</div><div>05/05/2025</div></Clock>
          </Tray>
        </Taskbar>
      </Desktop>
    </>
  );
}
